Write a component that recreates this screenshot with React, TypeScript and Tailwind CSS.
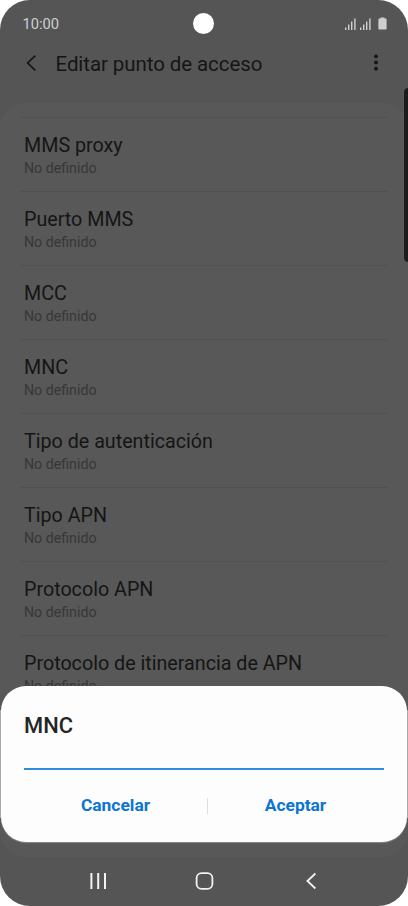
import { useState } from 'react';

const SETTINGS = [
  'MMS proxy',
  'Puerto MMS',
  'MCC',
  'MNC',
  'Tipo de autenticación',
  'Tipo APN',
  'Protocolo APN',
  'Protocolo de itinerancia de APN',
];

function SignalIcon({ className }: { className: string }) {
  return (
    <svg className={className} width="11" height="12" viewBox="0 0 11 12" fill="currentColor" aria-hidden>
      <rect x="0" y="9.5" width="1.4" height="2.5" />
      <rect x="3" y="6.5" width="1.4" height="5.5" />
      <rect x="6" y="3.5" width="1.4" height="8.5" />
      <rect x="9.2" y="0.5" width="1.4" height="11.5" />
    </svg>
  );
}

function StatusBar() {
  return (
    <div className="flex h-[47px] items-center pl-[22.5px] pr-[22.5px] text-[#cfcfcf]">
      <span className="flex-1 text-[14.7px] leading-5">10:00</span>
      {/* camera cutout */}
      <span className="size-[21px] -translate-x-px rounded-full bg-white" />
      <div className="flex flex-1 items-center justify-end">
        <SignalIcon className="mr-[4px]" />
        <SignalIcon className="mr-[7px]" />
        <svg className="-mr-px" width="9" height="13" viewBox="0 0 9 13" fill="currentColor" aria-hidden>
          <path d="M2.5 0.4h4v1.2h1.3q.8 0 .8.8v9.4q0 .8-.8.8H1.2q-.8 0-.8-.8V2.4q0-.8.8-.8h1.3z" />
        </svg>
      </div>
    </div>
  );
}

function TitleBar() {
  return (
    <header className="flex h-[56px] items-start px-[26px] pt-[3px] text-[#151515]">
      <svg className="mt-[4px]" width="11" height="18" viewBox="0 0 11 18" fill="none" stroke="currentColor" strokeWidth="1.7" aria-hidden>
        <path d="M9.3 1.6 1.7 9l7.6 7.4" />
      </svg>
      <h1 className="ml-[18.5px] flex-1 text-[20.5px] leading-7 tracking-[-0.08px]">Editar punto de acceso</h1>
      <svg className="mt-[4px] mr-[4px]" width="4" height="17" viewBox="0 0 4 17" fill="currentColor" aria-hidden>
        <circle cx="2" cy="2.3" r="1.9" />
        <circle cx="2" cy="8.5" r="1.9" />
        <circle cx="2" cy="14.7" r="1.9" />
      </svg>
    </header>
  );
}

function SettingRow({ title }: { title: string }) {
  return (
    <li className="h-[74px] border-t border-[#515151] px-1 pt-[16px]">
      <div className="text-[19.7px] leading-6 text-[#151515]">{title}</div>
      <div className="text-[14.2px] leading-5 text-[#373737]">No definido</div>
    </li>
  );
}

function EditDialog() {
  const [value, setValue] = useState('');

  return (
    <div
      role="dialog"
      aria-label="MNC"
      className="absolute inset-x-px top-[686px] h-[156px] rounded-[25px] bg-[#fdfdfd] px-[23px] pt-[26px] shadow-[0_1px_1px_#8a8a8a]"
    >
      {/* light seams along the straight part of each side */}
      <span className="absolute -left-px top-6 bottom-6 w-px bg-[#aaaaaa]" />
      <span className="absolute -right-px top-6 bottom-6 w-px bg-[#aaaaaa]" />
      <h2 className="text-[21.9px] font-medium leading-7 text-[#252525]">MNC</h2>
      <input
        aria-label="MNC"
        value={value}
        onChange={(e) => setValue(e.target.value)}
        className="block h-[30px] w-full border-b-2 border-[#2f8edb] bg-transparent text-base outline-none"
      />
      <div className="flex h-[71px] items-center text-[17.4px] font-bold text-[#0b74d4]">
        <button type="button" className="w-[183px]">Cancelar</button>
        <span className="h-4 w-px bg-[#dedede]" />
        <button type="button" className="w-[175px]">Aceptar</button>
      </div>
    </div>
  );
}

function NavBar() {
  return (
    <nav className="flex h-[49px] items-center pb-px pl-[89px] text-[#f2f2f2]">
      <svg width="18" height="18" viewBox="0 0 18 18" fill="none" stroke="currentColor" strokeWidth="2" aria-hidden>
        <path d="M2.4 1v16M9.2 1v16M16 1v16" />
      </svg>
      <svg className="mr-[91px] ml-[88px]" width="19" height="18" viewBox="0 0 19 18" fill="none" stroke="currentColor" strokeWidth="1.8" aria-hidden>
        <rect x="1.6" y="1.1" width="15.8" height="15.8" rx="5" />
      </svg>
      <svg width="12" height="18" viewBox="0 0 12 18" fill="none" stroke="currentColor" strokeWidth="1.8" aria-hidden>
        <path d="M10.4 1.5 2.4 9l8 7.5" />
      </svg>
    </nav>
  );
}

export default function App() {
  return (
    <div className="h-[906px] w-[408px] bg-white font-[Roboto,sans-serif]">
      <div className="relative flex h-full flex-col overflow-hidden rounded-[30px] bg-[#555555]">
        <StatusBar />
        <TitleBar />
        <main className="h-[754px] overflow-hidden rounded-[24px] bg-[#585858] px-5 pt-[14px]">
          <ul>
            {SETTINGS.map((title) => (
              <SettingRow key={title} title={title} />
            ))}
          </ul>
        </main>
        <NavBar />

        {/* edge panel handle */}
        <div className="absolute right-0 top-[88px] h-[174px] w-[4px] rounded-l-[4px] bg-[#1c1c1c] shadow-[0_0_1px_#8a8a8a]" />
        <EditDialog />
      </div>
    </div>
  );
}
